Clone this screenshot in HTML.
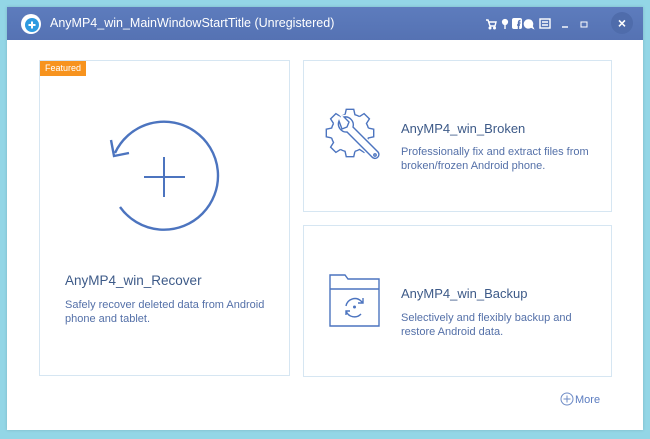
<!DOCTYPE html>
<html><head><meta charset="utf-8"><style>
*{margin:0;padding:0;box-sizing:border-box}
body{width:650px;height:439px;background:#93d6e6;font-family:"Liberation Sans",sans-serif;position:relative;overflow:hidden}
.win{position:absolute;left:7px;top:7px;width:636px;height:423px;background:#fff;box-shadow:0 0 3px rgba(0,0,0,.15)}
.tb{position:absolute;left:0;top:0;width:636px;height:33px;background:linear-gradient(#5d7cbd,#5572b3)}
.tb .t{position:absolute;left:43px;top:9px;color:#fff;font-size:12.5px}
.card{position:absolute;border:1px solid #d6e6f2;background:#fff}
.h{position:absolute;color:#3d5a88;font-size:13px}
.d{position:absolute;color:#5470a8;font-size:11px;line-height:13.5px}
</style></head><body>
<div class="win">
<div class="tb">
<svg style="position:absolute;left:13px;top:6px" width="22" height="22" viewBox="0 0 22 22"><circle cx="11" cy="11" r="10" fill="#fff"/><circle cx="12" cy="12" r="7" fill="#2e9be0"/><path d="M12 8.5v7M8.5 12h7" stroke="#fff" stroke-width="2"/></svg>
<div class="t">AnyMP4_win_MainWindowStartTitle (Unregistered)</div>
<svg style="position:absolute;left:478px;top:10px" width="150" height="16" viewBox="0 0 150 16" fill="none" stroke="#fff" stroke-width="1.4">
<path d="M1 3h2l2 6h5l1-4H4"/><circle cx="5" cy="11" r=".8" fill="#fff"/><circle cx="9.5" cy="11" r=".8" fill="#fff"/>
<circle cx="20" cy="5" r="2.4" fill="#fff"/><path d="M20 7v5"/>
<rect x="27" y="1" width="10" height="11" rx="2" fill="#fff" stroke="none"/><path d="M33.5 12V6h2M32 8h3M33.5 6c0-2 .5-2.5 2-2.5" stroke="#5572b3"/>
<path d="M44 3a4 4 0 1 0 2 7l2 1-1-2a4 4 0 0 0-3-6z" fill="#fff"/>
<rect x="55" y="2" width="10" height="9"/><path d="M57 5h6M57 8h6"/>
<path d="M77 10h6"/><rect x="96" y="5" width="6" height="5" stroke-width="1"/>
</svg>
<div style="position:absolute;left:604px;top:5px;width:22px;height:22px;border-radius:50%;background:#4f6cab;color:#fff;text-align:center;font-size:14px;line-height:22px;font-weight:bold">×</div>
</div>
<div class="card" style="left:32px;top:53px;width:251px;height:316px">
<div style="position:absolute;left:0;top:0;width:46px;height:15px;background:#f7931e;color:#fff;font-size:9px;line-height:15px;text-align:center">Featured</div>
<div class="h" style="left:25px;top:212px;font-size:13.5px">AnyMP4_win_Recover</div>
<div class="d" style="left:25px;top:238px">Safely recover deleted data from Android<br>phone and tablet.</div>
</div>
<div class="card" style="left:296px;top:53px;width:309px;height:152px">
<div class="h" style="left:97px;top:60px">AnyMP4_win_Broken</div>
<div class="d" style="left:97px;top:85px">Professionally fix and extract files from<br>broken/frozen Android phone.</div>
</div>
<div class="card" style="left:296px;top:218px;width:309px;height:152px">
<div class="h" style="left:97px;top:60px">AnyMP4_win_Backup</div>
<div class="d" style="left:97px;top:86px">Selectively and flexibly backup and<br>restore Android data.</div>
</div>
<svg style="position:absolute;left:0;top:0" width="636" height="423" viewBox="7 7 636 423" fill="none" stroke="#4c74bf" stroke-width="2.4">
<path d="M120 207 A54 54 0 1 0 115 153"/><path d="M111 140l3 16 15-3"/>
<path d="M144 177h41M164 157v40" stroke-width="2"/>
<g stroke-width="1.4">
<g transform="translate(350 133)">
<path id="tooth" d="M18.35 -4.92L23.7 -3.75L23.7 3.75L18.35 4.92A19 19 0 0 1 16.45 9.5"/>
<use href="#tooth" transform="rotate(45)"/><use href="#tooth" transform="rotate(90)"/><use href="#tooth" transform="rotate(135)"/>
<use href="#tooth" transform="rotate(180)"/><use href="#tooth" transform="rotate(225)"/><use href="#tooth" transform="rotate(270)"/><use href="#tooth" transform="rotate(315)"/>
</g>
<path d="M339 121a8 8 0 0 0 8 11l25 25a3 3 0 0 0 6-5l-25-25a8 8 0 0 0-9-10l5 5-2 5-5 2z" fill="#fff" stroke-width="4" stroke="#fff"/>
<path d="M339 121a8 8 0 0 0 8 11l25 25a3 3 0 0 0 6-5l-25-25a8 8 0 0 0-9-10l5 5-2 5-5 2z"/>
<circle cx="375" cy="155" r="1.2"/>
<path d="M330 283v-8h15l3 4h31v47h-49z M330 289h49"/>
<path d="M346 306a9 9 0 0 1 15-5l2 2m-17 8a9 9 0 0 0 15 3M363 298v5h-5M346 315v-4h4"/>
<circle cx="354.5" cy="307" r=".8" fill="#4c74bf"/>
</g>
</svg>
<svg style="position:absolute;left:553px;top:385px" width="14" height="14" viewBox="0 0 14 14" fill="none" stroke="#6f8cc6"><circle cx="7" cy="7" r="6"/><path d="M7 3.5v7M3.5 7h7"/></svg>
<div style="position:absolute;left:568px;top:387px;font-size:11px;color:#5b7cc0">More</div>
</div>
</body></html>
